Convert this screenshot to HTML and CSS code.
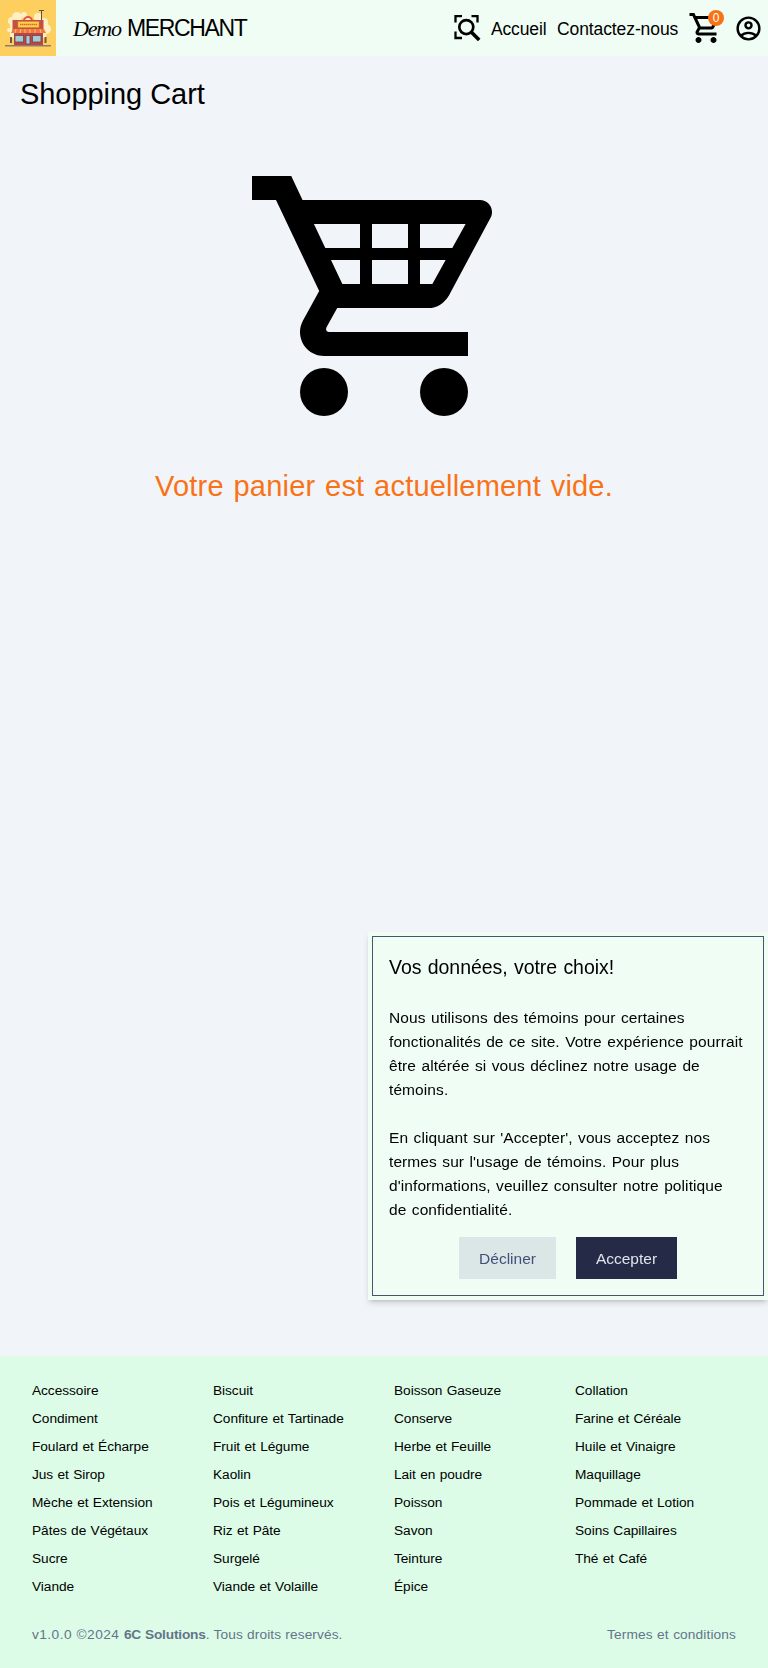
FILE: index.html
```html
<!DOCTYPE html>
<html lang="fr">
<head>
<meta charset="utf-8">
<title>Demo Merchant</title>
<link rel="stylesheet" href="styles.css">
</head>
<body>
<header class="topbar">
  <svg class="logo" viewBox="0 0 56 56">
    <rect width="56" height="56" fill="#fccf5e"/>
    <g fill="#fff0c4">
      <circle cx="12" cy="21" r="4"/><circle cx="17" cy="17" r="5"/><circle cx="24" cy="15" r="3"/><circle cx="38" cy="17" r="4"/><circle cx="44" cy="22" r="4"/><circle cx="46" cy="29" r="5"/><circle cx="9" cy="30" r="2"/>
      <rect x="10" y="20" width="36" height="18"/>
    </g>
    <path d="M41.500 22V11M39 10.500h5" stroke="#655047" stroke-width="1" fill="none"/>
    <circle cx="28" cy="21" r="5" fill="#e8543c"/><circle cx="28" cy="21" r="3" fill="#fff1dc"/>
    <rect x="12.500" y="20" width="31" height="12" fill="#c54f41"/>
    <rect x="14" y="30" width="29" height="15" fill="#bb4545"/>
    <rect x="18" y="21.500" width="21" height="6" fill="#ffd04c" stroke="#d78736" stroke-width=".6"/>
    <path d="M20 24.500h17" stroke="#d46535" stroke-width="1.500" stroke-dasharray="1.500 .5"/>
    <path d="M13 29h31l2 4H11z" fill="#ee7840"/>
    <path d="M16 29l-1 4m6-4l-1 4m5-4v4m5-4v4m5-4v4m5-4l1 4" stroke="#ffc064" stroke-width="1"/>
    <path d="M15 35.500h8.500V42H15zM26 35.500h4V44h-4zM32.500 35.500H41V42h-8.500z" fill="#a4ccd2" stroke="#6a4550" stroke-width=".8"/>
    <path d="M11 37v6M45.500 37v6" stroke="#76563a" stroke-width="2"/>
    <path d="M5 45.700h46" stroke="#8e7b76" stroke-width="1.400"/>
  </svg>
  <div class="brand"><span class="script">Demo</span><span class="name">MERCHANT</span></div>
  <nav class="nav">
    <svg class="scan" viewBox="0 0 32 32" fill="none" stroke="#000">
      <path d="M4.500 10.500V4.200h6.500M20.500 4.200h6v6.300M4.500 19.500v6.500h6.500" stroke-width="2.300"/>
      <circle cx="15.300" cy="15.100" r="7" stroke-width="2.700"/>
      <path d="M20.200 20l8 8" stroke-width="3.600"/>
    </svg>
    <a class="home">Accueil</a>
    <a class="contact">Contactez-nous</a>
    <span class="cart">
      <svg viewBox="0 0 24 24"><path d="M15.550 13c.75 0 1.410-.41 1.750-1.030l3.580-6.490c.37-.66-.11-1.480-.87-1.480H5.210l-.94-2H1v2h2l3.600 7.590-1.350 2.440C4.520 15.370 5.480 17 7 17h12v-2H7l1.100-2h7.450zM6.160 6h12.150l-2.760 5H8.530L6.160 6zM7 18c-1.100 0-1.990.9-1.990 2S5.900 22 7 22s2-.9 2-2-.9-2-2-2zm10 0c-1.100 0-1.990.9-1.990 2s.89 2 1.990 2 2-.9 2-2-.9-2-2-2z"/></svg>
      <span class="badge">0</span>
    </span>
    <svg class="user" viewBox="0 0 24 24" fill="none" stroke="#000" stroke-width="2">
      <circle cx="12" cy="12" r="9"/><circle cx="12" cy="9.400" r="2.500"/>
      <path d="M5.700 18c1.600-1.500 3.900-2.400 6.300-2.400s4.700.9 6.300 2.400"/>
    </svg>
  </nav>
</header>
<main class="page">
  <h1 class="title">Shopping Cart</h1>
  <svg class="empty-cart" viewBox="0 0 24 24">
    <path fill-rule="evenodd" d="M15.700 13c.75 0 1.300-.41 1.700-1.030L20.880 5.480c.08-.14.12-.31.12-.48 0-.55-.45-1-1-1H5.210l-.94-2H1v2h2l3.600 7.590-1.350 2.450C5.090 14.320 5 14.650 5 15c0 1.100.9 2 2 2h12v-2H7.420c-.14 0-.25-.11-.25-.25l.03-.12L8.100 13zM6.160 6H18.800l-2.770 5H8.530z"/>
    <path d="M10 5h1v7h-1zM14 5h1v7h-1zM7 8h11v1H7z"/>
    <circle cx="7" cy="20" r="2"/><circle cx="17" cy="20" r="2"/>
  </svg>
  <p class="empty-text">Votre panier est actuellement vide.</p>
</main>
<footer class="footer">
  <div class="categories">
    <a>Accessoire</a><a>Biscuit</a><a>Boisson Gaseuze</a><a>Collation</a>
    <a>Condiment</a><a>Confiture et Tartinade</a><a>Conserve</a><a>Farine et Céréale</a>
    <a>Foulard et Écharpe</a><a>Fruit et Légume</a><a>Herbe et Feuille</a><a>Huile et Vinaigre</a>
    <a>Jus et Sirop</a><a>Kaolin</a><a>Lait en poudre</a><a>Maquillage</a>
    <a>Mèche et Extension</a><a>Pois et Légumineux</a><a>Poisson</a><a>Pommade et Lotion</a>
    <a>Pâtes de Végétaux</a><a>Riz et Pâte</a><a>Savon</a><a>Soins Capillaires</a>
    <a>Sucre</a><a>Surgelé</a><a>Teinture</a><a>Thé et Café</a>
    <a>Viande</a><a>Viande et Volaille</a><a>Épice</a>
  </div>
  <div class="legal"><span class="copy"><span class="version">v1.0.0 ©2024 </span><b>6C Solutions</b>. Tous droits reservés.</span><a class="terms">Termes et conditions</a></div>
</footer>
<aside class="consent">
  <div class="consent-box">
    <h2>Vos données, votre choix!</h2>
    <p>Nous utilisons des témoins pour certaines<br>fonctionalités de ce site. Votre expérience pourrait<br>être altérée si vous déclinez notre usage de<br>témoins.</p>
    <p>En cliquant sur 'Accepter', vous acceptez nos<br>termes sur l'usage de témoins. Pour plus<br>d'informations, veuillez consulter notre politique<br>de confidentialité.</p>
    <div class="actions"><button class="decline">Décliner</button><button class="accept">Accepter</button></div>
  </div>
</aside>
</body>
</html>
```
FILE: styles.css
```css
* { box-sizing: border-box; margin: 0; }
body {
  min-height: 1668px;
  display: flex;
  flex-direction: column;
  background: #f1f5f9;
  color: #000;
  font-family: "Liberation Sans", Arial, sans-serif;
}
svg { display: block; flex: none; }
.topbar { display: flex; height: 56px; background: #f0fdf4; align-items: center; }
.logo { width: 56px; height: 56px; }
.brand { display: flex; align-items: baseline; margin-left: 17px; line-height: 32px; }
.script { width: 54px; font: italic 22px/32px "Liberation Serif", serif; letter-spacing: -1.2px; }
.name { font-size: 23px; letter-spacing: -1.35px; }
.nav { display: flex; align-items: center; margin-left: auto; font-size: 17.5px; line-height: 28px; }
.scan { width: 32px; height: 32px; margin-right: 8px; }
.home { width: 66px; padding-top: 1px; letter-spacing: -.15px; }
.contact { width: 131px; padding-top: 1px; letter-spacing: -.1px; }
.cart { position: relative; width: 36px; height: 36px; }
.cart svg { width: 36px; height: 36px; }
.badge {
  position: absolute; left: 20px; top: 0;
  width: 16px; height: 16px; border-radius: 50%;
  background: #f97316; color: #fff;
  font-size: 12px; line-height: 16px; text-align: center;
}
.user { width: 29px; height: 29px; margin: 1px 5px 0 10px; }
.page { flex: 1; }
.title { padding: 20px 20px 0; font-size: 29px; line-height: 36px; font-weight: 400; letter-spacing: -.05px; }
.empty-cart { width: 288px; height: 288px; margin: 40px auto 0; }
.empty-text { margin-top: 28px; text-align: center; font-size: 29px; line-height: 36px; letter-spacing: .2px; word-spacing: 1.500px; color: #f97316; }
.footer { height: 312px; padding: 21px 32px 0; background: #dcfce7; font-size: 13.7px; }
.categories { display: grid; grid-template-columns: repeat(4, 1fr); column-gap: 20px; grid-auto-rows: 28px; line-height: 28px; letter-spacing: -.05px; word-spacing: .6px; }
.legal { display: flex; justify-content: space-between; margin-top: 24px; line-height: 20px; color: #64748b; }
.copy { letter-spacing: .1px; word-spacing: .3px; }
.version { letter-spacing: .45px; }
.copy b { font-weight: 700; letter-spacing: -.18px; }
.terms { letter-spacing: .12px; word-spacing: .5px; }
.consent { position: fixed; right: 0; top: 932px; width: 400px; height: 368px; padding: 4px; background: #f0fdf4; box-shadow: 0 4px 6px -1px rgba(0,0,0,.15), 0 2px 4px -2px rgba(0,0,0,.15); }
.consent-box { height: 360px; padding: 16px; border: 1px solid #475569; }
.consent h2 { font-size: 19.5px; line-height: 28px; font-weight: 400; letter-spacing: -.05px; word-spacing: 1px; }
.consent p { margin-top: 24px; font-size: 15.5px; line-height: 24px; letter-spacing: .09px; word-spacing: 1px; white-space: nowrap; }
.consent h2 + p { margin-top: 25px; }
.actions { display: flex; justify-content: center; gap: 20px; margin-top: 15px; }
.actions button { height: 42px; padding: 1px 0 0; border: 0; font: 15.5px "Liberation Sans", Arial, sans-serif; }
.decline { width: 97px; background: #dbe6e6; color: #434f78; }
.accept { width: 101px; background: #252b46; color: #dfe3ee; }
```
